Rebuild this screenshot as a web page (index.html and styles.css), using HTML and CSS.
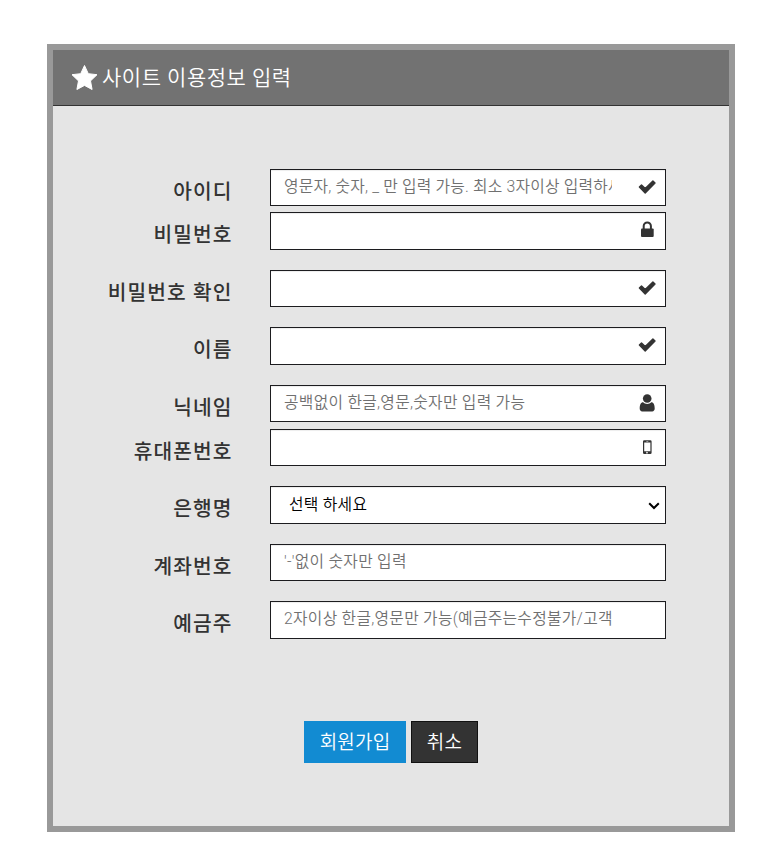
FILE: index.html
```
<!DOCTYPE html>
<html lang="ko">
<head>
    <meta charset="UTF-8">
    <meta name="viewport" content="width=device-width, initial-scale=1.0">
    <title>회원가입</title>
    <link rel="stylesheet" href="styles.css">
</head>
<body>
    <div class="panel">
        <div class="panel-title">
            <svg class="star" viewBox="0 0 26 25"><path d="M13 .5l3.800 8.200 8.700 1-6.500 6.200L20.600 24.500 13 20.400 5.400 24.500 7 15.900.5 9.700l8.700-1z"/></svg>
            <span>사이트 이용정보 입력</span>
        </div>
        <form class="join-form">
            <div class="form-row tight">
                <label for="userId">아이디</label>
                <div class="field">
                    <input type="text" id="userId" class="long-hint" placeholder="영문자, 숫자, _ 만 입력 가능. 최소 3자이상 입력하세요">
                    <svg class="icon" viewBox="0 0 18 18"><path d="M1.400 9l2.100-2.100L7.200 10.500 14.900 3l2.100 2.100L7.200 14.900z" class="check"/></svg>
                </div>
            </div>
            <div class="form-row">
                <label for="password">비밀번호</label>
                <div class="field">
                    <input type="password" id="password">
                    <svg class="icon" viewBox="0 0 18 18"><path d="M5.700 8.500V5a3.600 3.600 0 0 1 7.200 0v3.500" class="shackle"/><rect x="3" y="7.600" width="12.700" height="8.400" rx="1"/></svg>
                </div>
            </div>
            <div class="form-row">
                <label for="passwordCheck">비밀번호 확인</label>
                <div class="field">
                    <input type="password" id="passwordCheck">
                    <svg class="icon" viewBox="0 0 18 18"><path d="M1.400 9l2.100-2.100L7.200 10.500 14.900 3l2.100 2.100L7.200 14.900z" class="check"/></svg>
                </div>
            </div>
            <div class="form-row">
                <label for="userName">이름</label>
                <div class="field">
                    <input type="text" id="userName">
                    <svg class="icon" viewBox="0 0 18 18"><path d="M1.400 9l2.100-2.100L7.200 10.500 14.900 3l2.100 2.100L7.200 14.900z" class="check"/></svg>
                </div>
            </div>
            <div class="form-row tight">
                <label for="nickname">닉네임</label>
                <div class="field">
                    <input type="text" id="nickname" placeholder="공백없이 한글,영문,숫자만 입력 가능">
                    <svg class="icon" viewBox="0 0 18 18"><circle cx="9.200" cy="4.500" r="4.300"/><path d="M5.200 8.300c1 1 2.300 1.600 4 1.600s3-.6 4-1.600c2.500 0 3.500 2.500 3.500 6.300 0 1.700-1 2.900-2.500 2.900h-10c-1.500 0-2.500-1.200-2.500-2.900 0-3.800 1-6.300 3.500-6.300z"/></svg>
                </div>
            </div>
            <div class="form-row">
                <label for="phone">휴대폰번호</label>
                <div class="field">
                    <input type="text" id="phone">
                    <svg class="icon" viewBox="0 0 18 18"><path fill-rule="evenodd" d="M6.300 2.200h6a1.300 1.300 0 0 1 1.300 1.300v11.300a1.300 1.300 0 0 1-1.300 1.300h-6A1.300 1.300 0 0 1 5 14.800V3.500a1.300 1.300 0 0 1 1.300-1.300zm-.1 2.300v8.700h6.200V4.500zm2.100-1.400v.5h2v-.5zm1 10.800a.8.8 0 1 0 0 1.500.8.8 0 0 0 0-1.500z"/></svg>
                </div>
            </div>
            <div class="form-row">
                <label for="bank">은행명</label>
                <div class="field">
                    <select id="bank">
                        <option>선택 하세요</option>
                    </select>
                    <svg class="arrow" viewBox="0 0 12 8"><path d="M1.200 1.200L6 6l4.800-4.800"/></svg>
                </div>
            </div>
            <div class="form-row">
                <label for="account">계좌번호</label>
                <div class="field">
                    <input type="text" id="account" placeholder="'-'없이 숫자만 입력">
                </div>
            </div>
            <div class="form-row">
                <label for="holder">예금주</label>
                <div class="field">
                    <input type="text" id="holder" placeholder="2자이상 한글,영문만 가능(예금주는수정불가/고객">
                </div>
            </div>
            <div class="buttons">
                <button type="submit" class="btn btn-join">회원가입</button>
                <button type="button" class="btn btn-cancel">취소</button>
            </div>
        </form>
    </div>
</body>
</html>
```
FILE: styles.css
```
* {
    box-sizing: border-box;
}

body {
    margin: 0;
    padding: 44px 41px 28px 47px;
    background-color: #fff;
    font-family: Roboto, "Noto Sans CJK KR", sans-serif;
    color: #333;
}

.panel {
    height: 788px;
    border: 6px solid #999;
    background-color: #e5e5e5;
}

.panel-title {
    display: flex;
    align-items: center;
    gap: 4px;
    height: 56px;
    padding: 0 18px;
    border-bottom: 1px solid #333;
    background-color: #727272;
    color: #fff;
    font-size: 21px;
    font-weight: 350;
    letter-spacing: 0.5px;
}

.panel-title span {
    padding-bottom: 4px;
}

.star {
    width: 27px;
    height: 25px;
    fill: #fff;
    stroke: #fff;
    stroke-linejoin: round;
}

.join-form {
    padding: 62.84px 63px 0 0;
}

.form-row {
    display: flex;
    height: 37.5px;
    margin-bottom: 20px;
}

.form-row.tight {
    margin-bottom: 6.1px;
}

.form-row label {
    width: 179.5px;
    margin-right: 37.5px;
    padding-top: 8px;
    font-size: 20.3px;
    font-weight: 500;
    line-height: 30px;
    letter-spacing: 1.1px;
    text-align: right;
    white-space: nowrap;
}

.field {
    position: relative;
    width: 396px;
}

.field input,
.field select {
    display: block;
    width: 100%;
    height: 37.5px;
    margin: 0;
    border: 1px solid #1c1c1f;
    border-radius: 0;
    background-color: #fff;
    box-shadow: inset 0 1px 1px rgba(0, 0, 0, 0.075);
    font-family: inherit;
    font-size: 15.8px;
    font-weight: 350;
    letter-spacing: 0.28px;
    outline: none;
}

.field input {
    padding: 0 53px 2px 13px;
}

.field input.long-hint {
    letter-spacing: 0.2px;
}

.field input::placeholder {
    color: #707070;
}

.field select {
    appearance: none;
    padding: 0 0 1px 18px;
    color: #000;
}

/* icon sits over the right end of the input */
.icon {
    position: absolute;
    top: 9px;
    right: 10px;
    width: 18px;
    height: 18px;
    fill: #333;
}

.arrow {
    position: absolute;
    top: 16px;
    right: 6px;
    width: 12px;
    height: 8px;
    fill: none;
    stroke: #000;
    stroke-width: 2;
    pointer-events: none;
}

.check {
    stroke: #333;
    stroke-width: 1.4;
    stroke-linejoin: round;
}

.shackle {
    fill: none;
    stroke: #333;
    stroke-width: 2;
}

.buttons {
    display: flex;
    gap: 5px;
    padding: 62px 0 0 251px;
}

.btn {
    height: 42px;
    padding: 0 0 3px;
    border: 1px solid #128bd2;
    background-color: #128bd2;
    color: #fff;
    font-family: inherit;
    font-size: 19px;
    font-weight: 350;
    letter-spacing: 0.2px;
    cursor: pointer;
}

.btn-join {
    width: 102px;
}

.btn-cancel {
    width: 67px;
    border-color: #111;
    background-color: #333;
}
```
